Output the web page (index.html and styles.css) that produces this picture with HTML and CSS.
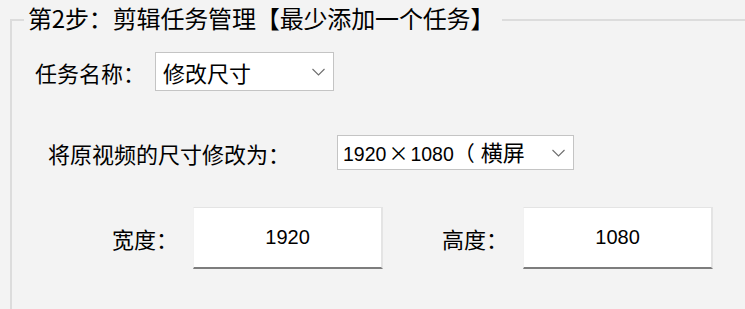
FILE: index.html
```html
<!DOCTYPE html>
<html lang="zh-CN">
<head>
<meta charset="utf-8">
<link rel="stylesheet" href="styles.css">
</head>
<body>
<fieldset class="group">
  <legend class="group-title">第2步：剪辑任务管理【最少添加一个任务】</legend>
  <div class="row row-task">
    <span class="label">任务名称：</span>
    <div class="combo combo-task">
      <span class="combo-text">修改尺寸</span>
      <svg class="chev" width="13" height="8" viewBox="0 0 13 8"><polyline points="0.5,1 6.5,7 12.5,1" fill="none" stroke="#6e6e6e" stroke-width="1.1"/></svg>
    </div>
  </div>
  <div class="row row-size">
    <span class="label">将原视频的尺寸修改为：</span>
    <div class="combo combo-size">
      <span class="combo-text num-text">1920<span class="times">×</span>1080<span class="paren">（</span><span class="cjk">横屏</span></span>
      <svg class="chev" width="13" height="8" viewBox="0 0 13 8"><polyline points="0.5,1 6.5,7 12.5,1" fill="none" stroke="#6e6e6e" stroke-width="1.1"/></svg>
    </div>
  </div>
  <div class="row row-dims">
    <span class="label">宽度：</span>
    <div class="numbox">1920</div>
    <span class="label label-h">高度：</span>
    <div class="numbox">1080</div>
  </div>
</fieldset>
</body>
</html>
```
FILE: styles.css
```css
html, body {
  margin: 0;
  padding: 0;
  background: #f3f3f3;
  overflow: hidden;
}
body {
  width: 745px;
  height: 309px;
  font-family: "Noto Sans CJK SC", "Liberation Sans", sans-serif;
  color: #000;
}
.group {
  margin: 0 0 0 10px;
  padding: 0;
  width: 735px;
  height: 309px;
  border: 2px solid #dcdcdc;
  border-right: none;
  border-bottom: none;
  box-sizing: border-box;
}
.group-title {
  margin-left: 12px;
  padding: 0 8px 0 4px;
  font-size: 24px;
  letter-spacing: -0.15px;
  line-height: 36px;
  height: 39px;
  box-sizing: border-box;
}
.row {
  display: flex;
  align-items: center;
}
.label {
  font-size: 22px;
  line-height: 26px;
  white-space: nowrap;
}
.row-task {
  margin: 13px 0 0 23px;
  height: 39px;
}
.row-task .label { margin-right: 10px; }
.row-size {
  margin: 44px 0 0 36px;
  height: 35px;
}
.row-size .label { margin-right: 47px; }
.row-dims {
  margin: 37px 0 0 100px;
  height: 62px;
}
.row-dims .label { margin-right: 15px; }
.row-dims .label-h { margin-left: 59px; }
.combo {
  display: flex;
  align-items: center;
  justify-content: space-between;
  background: #fff;
  border: 1px solid #c4c4c4;
  box-sizing: border-box;
  height: 100%;
  padding: 0 8px 0 7px;
}
.combo-task { width: 179px; }
.combo-size { width: 237px; padding-left: 5px; }
.combo-text {
  white-space: nowrap;
  font-size: 22px;
  line-height: 26px;
}
.num-text {
  font-family: "Liberation Sans", "Noto Sans CJK SC", sans-serif;
  font-size: 19.5px;
}
.times {
  font-family: "Noto Sans CJK SC", sans-serif;
  font-size: 20px;
  margin: 0 2px;
}
.paren {
  font-family: "Noto Sans CJK SC", sans-serif;
  font-size: 21px;
  margin-right: 6px;
}
.cjk {
  font-family: "Noto Sans CJK SC", sans-serif;
  font-size: 22px;
}
.chev {
  flex: none;
  margin-left: 4px;
}
.numbox {
  width: 190px;
  height: 62px;
  box-sizing: border-box;
  background: #fff;
  border-top: 1px solid #e4e4e4;
  border-left: 1px solid #f2f2f2;
  border-right: 2px solid #e4e4e4;
  border-bottom: 2px solid #7d7d7d;
  display: flex;
  align-items: center;
  justify-content: center;
  font-family: "Liberation Sans", sans-serif;
  font-size: 20px;
}
```
